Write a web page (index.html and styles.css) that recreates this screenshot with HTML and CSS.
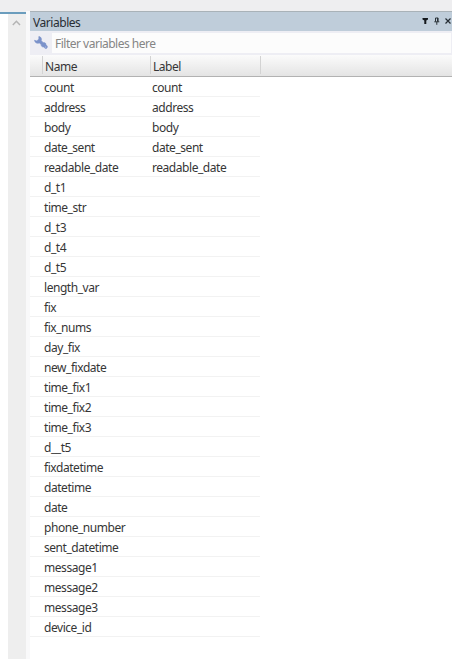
FILE: index.html
```
<!DOCTYPE html>
<html lang="en">
<head>
<meta charset="utf-8">
<title>Variables</title>
<link rel="stylesheet" href="styles.css">
</head>
<body>
<div class="window">
  <aside class="editor-edge">
    <div class="canvas"></div>
    <div class="scrollbar">
      <svg width="9" height="6" viewBox="0 0 9 6"><path d="M.8 5 4.400 1.300 8 5" fill="none" stroke="#b4b4b4" stroke-width="1.500"/></svg>
    </div>
  </aside>
  <div class="splitter"></div>
  <section class="panel">
    <header class="titlebar">
      <h1>Variables</h1>
      <div class="actions">
        <svg width="7" height="8" viewBox="0 0 7 8"><path d="M.5 1H6v1.500L4.300 3.500V7H2.300V3.500L.5 2.500z" fill="#14181c"/></svg>
        <svg width="6" height="8" viewBox="0 0 6 8"><path d="M1.500 4.700V1h2.600v3.700M.3 4.800h5M2.800 5v2.800" fill="none" stroke="#2a3238"/><path d="M3.500 1v3.700" stroke="#2a3238"/></svg>
        <svg width="6" height="8" viewBox="0 0 6 8"><path d="m.5 1.500 5 5m0-5-5 5" stroke="#252d34" stroke-width="1.200"/></svg>
      </div>
    </header>
    <div class="toolbar">
      <svg class="wrench" width="14" height="14" viewBox="0 0 14 14"><path d="M4.800.6C6.800.6 7.900 2.600 7.300 4.700L9.300 6.700C11 6.300 11.900 7.300 12 8.700L13.300 10.200C13.700 11.400 12.700 12.800 11.400 12.500L9.700 11C8 11.100 7 10.100 7.200 8.600L5.300 6.900C3 7.900.9 6.700.5 4.300L2.800 4.900 4.900 3.100z" fill="#7b92ca" stroke="#7b92ca" stroke-width=".6" stroke-linejoin="round"/><circle cx="11.700" cy="11" r=".6" fill="#c5cfec"/></svg>
      <input class="filter" type="text" placeholder="Filter variables here" aria-label="Filter variables">
    </div>
    <div class="columns"><span class="gutter"></span><span>Name</span><span>Label</span></div>
    <div class="rows">
      <div class="row"><span>count</span><span>count</span></div>
      <div class="row"><span>address</span><span>address</span></div>
      <div class="row"><span>body</span><span>body</span></div>
      <div class="row"><span>date_sent</span><span>date_sent</span></div>
      <div class="row"><span>readable_date</span><span>readable_date</span></div>
      <div class="row"><span>d_t1</span></div>
      <div class="row"><span>time_str</span></div>
      <div class="row"><span>d_t3</span></div>
      <div class="row"><span>d_t4</span></div>
      <div class="row"><span>d_t5</span></div>
      <div class="row"><span>length_var</span></div>
      <div class="row"><span>fix</span></div>
      <div class="row"><span>fix_nums</span></div>
      <div class="row"><span>day_fix</span></div>
      <div class="row"><span>new_fixdate</span></div>
      <div class="row"><span>time_fix1</span></div>
      <div class="row"><span>time_fix2</span></div>
      <div class="row"><span>time_fix3</span></div>
      <div class="row"><span>d__t5</span></div>
      <div class="row"><span>fixdatetime</span></div>
      <div class="row"><span>datetime</span></div>
      <div class="row"><span>date</span></div>
      <div class="row"><span>phone_number</span></div>
      <div class="row"><span>sent_datetime</span></div>
      <div class="row"><span>message1</span></div>
      <div class="row"><span>message2</span></div>
      <div class="row"><span>message3</span></div>
      <div class="row"><span>device_id</span></div>
    </div>
  </section>
</div>
</body>
</html>
```
FILE: styles.css
```
* { box-sizing: border-box; }
body {
  margin: 0;
  background: #eeeef0;
  color: #363636;
  font: 12px/19px "Noto Sans", "Open Sans", sans-serif;
  letter-spacing: -0.45px;
}
svg { display: block; flex: none; }
.window { display: flex; height: 659px; padding-top: 11px; overflow: hidden; }
.editor-edge {
  display: grid;
  grid-template-columns: 8px 18px;
  width: 26px;
  margin-top: 1px;
  border-top: 2px solid #6b9dbd;
}
.canvas { background: #fff; }
.scrollbar { background: #eee; padding: 6px 0 0 4px; }
.splitter { width: 4px; background: #f9f9fa; }
.panel { flex: 1; background: #fff; border-top: 1px solid #a9b2b8; }
.titlebar {
  display: flex;
  justify-content: space-between;
  align-items: center;
  height: 19px;
  padding: 0 1px 0 3px;
  background: #bfcdda;
}
h1 { margin: 0; padding-top: 1px; font-size: 12px; font-weight: 400; line-height: 19px; color: #282e34; }
.actions { display: flex; gap: 5px; padding-bottom: 1px; }
.toolbar {
  display: flex;
  height: 24px;
  padding: 2px 1px 2px 4px;
  background: #eeeef4;
}
.wrench { margin: 3px 4px 0 0; }
.filter {
  flex: 1;
  min-width: 0;
  height: 20px;
  padding: 1px 0 0 3px;
  border: 0;
  background: #fcfcfc;
  font: inherit;
  letter-spacing: -0.5px;
}
.filter::placeholder { color: #858585; opacity: 1; }
.columns {
  display: grid;
  grid-template-columns: 13px 108px 110px;
  height: 22px;
  padding-top: 1px;
  border-bottom: 1px solid #b2b2b2;
  background: linear-gradient(#fbfbfb, #e4e4e4);
}
.columns span { height: 18px; padding: 1px 0 0 2px; border-right: 1px solid #d3d3d3; }
.row {
  display: grid;
  grid-template-columns: 108px 108px;
  width: 230px;
  height: 20px;
  padding-left: 14px;
  border-bottom: 1px solid #f2f2f2;
}
.row span { padding-top: 1px; height: 19px; }
```
